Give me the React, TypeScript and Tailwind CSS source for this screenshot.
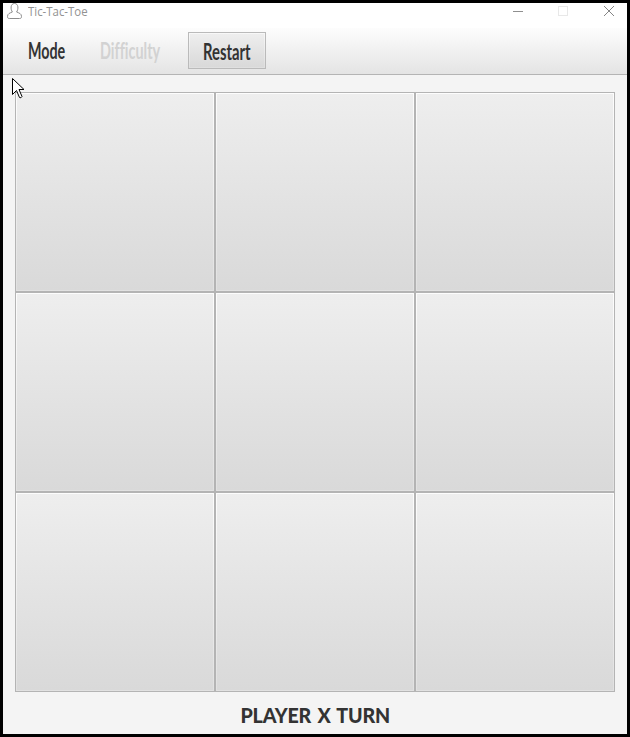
const cells = Array.from({ length: 9 }, (_, i) => i);

function TitleBar() {
  return (
    <header className="flex h-[25px] items-start bg-white">
      <svg className="ml-1 h-4 w-4 shrink-0" viewBox="0 0 16 16" fill="none" stroke="#8c8c8c" strokeWidth="1">
        <path d="M5.4 9C3.500 6.500 3.200 .5 7.500 .5S11.500 6.500 9.600 9C12 10 14.500 10.500 14.500 13.500C14.500 15 14 15.500 12.500 15.500H2.500C1 15.500 .5 15 .5 13.500C.5 10.500 3 10 5.400 9Z" />
      </svg>
      <h1 className="ml-[5px] w-[64px] origin-left scale-x-[0.95] whitespace-nowrap font-['Open_Sans',sans-serif] text-[12px] leading-[18px] text-[#929292]">
        Tic-Tac-Toe
      </h1>
      <svg className="ml-auto mr-3 h-[18px] w-[103px] shrink-0" viewBox="0 0 103 18" fill="none" shapeRendering="crispEdges">
        <path d="M1 8.500H11" stroke="#8f8f8f" />
        <rect x="46.500" y="3.500" width="9" height="9" stroke="#e8e8e8" />
        <path d="M92 3L102 13M102 3L92 13" stroke="#858585" shapeRendering="auto" />
      </svg>
    </header>
  );
}

function Toolbar() {
  return (
    <nav className="flex h-[47px] items-start border-b border-[#b4b4b4] bg-linear-to-b from-[#fdfdfd] to-[#e4e4e4] pl-[25px] pt-1 font-['Lato',sans-serif] text-[22px] leading-[38px] text-[#333333] [font-variant-ligatures:none]">
      <button className="h-[37px] w-[72px] text-left">
        <span className="inline-block origin-left scale-x-[0.65] font-bold">Mode</span>
      </button>
      <button className="h-[37px] w-[88px] text-left text-[#d2d2d2]">
        <span className="inline-block origin-left scale-x-[0.655] font-bold">Difficulty</span>
      </button>
      <button className="h-[37px] w-[78px] border border-[#bababa] bg-linear-to-b from-[#f8f8f8] to-[#dfdfdf] p-px text-left leading-[35px]">
        <span className="block h-full bg-linear-to-b from-[#eeeeee] to-[#d9d9d9] pl-[13px]">
          <span className="inline-block origin-left scale-x-[0.675] font-bold">Restart</span>
        </span>
      </button>
    </nav>
  );
}

export default function App() {
  return (
    <div className="flex h-[737px] w-[630px] flex-col overflow-hidden border-[3px] border-black bg-[#f4f4f4]">
      <TitleBar />
      <Toolbar />
      <main className="ml-3 mt-[17px] grid h-[600px] w-[600px] shrink-0 grid-cols-3 grid-rows-3">
        {cells.map((cell) => (
          <button
            key={cell}
            className="border border-[#b4b4b4] bg-linear-to-b from-[#fdfdfd] to-[#e1e1e1] p-px"
          >
            <span className="block h-full bg-linear-to-b from-[#eeeeee] to-[#d9d9d9]" />
          </button>
        ))}
      </main>
      <footer className="flex flex-1 justify-center pt-2 font-['Lato',sans-serif] text-[20px] font-black leading-[30px] text-[#333333]">
        <span className="scale-x-[0.98] whitespace-pre tracking-[-0.2px] [word-spacing:2px]">PLAYER X TURN</span>
      </footer>
      <svg className="absolute left-3 top-[77px] h-[23px] w-[13px]" viewBox="0 0 13 23">
        <path d="M.5 1.500V17.500L4.500 13.500L7.500 20.500Q9 21.500 10 19.500L7 12.500H12Z" fill="white" stroke="black" />
      </svg>
    </div>
  );
}
